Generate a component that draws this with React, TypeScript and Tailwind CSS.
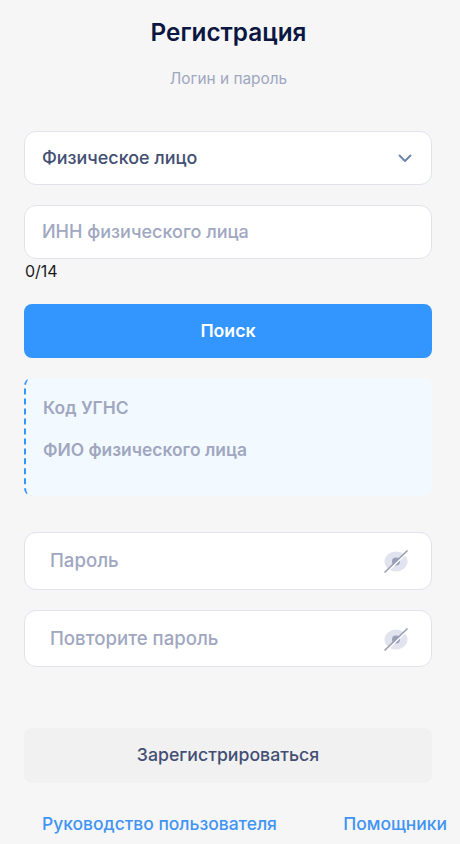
const EyeOff = () => (
  <svg width="26" height="26" viewBox="0 0 26 26" fill="none" className="shrink-0">
    <ellipse cx="13" cy="13.5" rx="11.5" ry="10" fill="#e1e4ee" />
    <circle cx="13" cy="13.5" r="4" fill="#9aa1b8" />
    <path d="M1.5 24.5 24.5 2.5" stroke="#fff" strokeWidth="2" transform="translate(0.8 0.8)" />
    <path d="M1.5 24.5 24.5 2.5" stroke="#9a9cb0" strokeWidth="1.6" />
  </svg>
)

const PasswordField = ({ label, className }: { label: string; className: string }) => (
  <div className={`flex items-center justify-between rounded-xl border border-[#e0e3ee] bg-white pl-[25px] pr-[22px] ${className}`}>
    <span className="text-[18.6px] font-medium text-[#a0a7c1]">{label}</span>
    <EyeOff />
  </div>
)

export default function App() {
  return (
    <div className="h-[844px] w-[460px] overflow-hidden bg-[#f6f6f6] font-['Inter',sans-serif]">
      <div className="flex h-[131px] flex-col items-center pr-[3px]">
        <h1 className="mt-[17px] text-[24.3px] leading-[30px] font-semibold text-[#0b1742]">Регистрация</h1>
        <p className="mt-[22px] text-[15.4px] leading-5 text-[#a0a7c1]">Логин и пароль</p>
      </div>

      <div className="flex flex-col pl-6 pr-7">
        <div className="flex h-[54px] items-center justify-between rounded-xl border border-[#e0e3ee] bg-white pl-[17px] pr-[19px]">
          <span className="text-[17.9px] font-medium text-[#434f73]">Физическое лицо</span>
          <svg width="14" height="9" viewBox="0 0 14 9" fill="none">
            <path d="M1.5 1.5l5.5 5.5 5.5-5.5" stroke="#6b82ad" strokeWidth="1.9" strokeLinecap="round" strokeLinejoin="round" />
          </svg>
        </div>

        <div className="mt-5 flex h-[54px] items-center rounded-xl border border-[#e0e3ee] bg-white px-[17px]">
          <span className="text-lg font-medium text-[#a0a7c1]">ИНН физического лица</span>
        </div>
        <div className="mt-0.5 pl-px text-base leading-5 text-[#1a1a1a]">0/14</div>

        <button className="mt-[23px] h-[54px] rounded-lg bg-[#3396ff] text-[17.7px] font-semibold text-white">Поиск</button>

        <div className="mt-5 h-[118px] rounded-lg border-l-2 border-dashed border-[#3396ff] bg-[#f2faff] pl-[17px] pt-5 text-[17.4px] font-semibold text-[#a1a7c0]">
          <div className="leading-5">Код УГНС</div>
          <div className="mt-[22px] leading-5">ФИО физического лица</div>
        </div>

        <PasswordField label="Пароль" className="mt-9 h-[58px]" />
        <PasswordField label="Повторите пароль" className="mt-5 h-[57px]" />

        <button className="mt-[61px] h-[55px] rounded-lg bg-[#f1f1f1] text-[17.7px] font-medium text-[#434f73]">Зарегистрироваться</button>
      </div>

      <div className="mt-[29px] flex justify-between pl-[42px] pr-[13px] text-[17.45px] leading-6 font-medium text-[#3f94f5]">
        <span>Руководство пользователя</span>
        <span>Помощники</span>
      </div>
    </div>
  )
}
